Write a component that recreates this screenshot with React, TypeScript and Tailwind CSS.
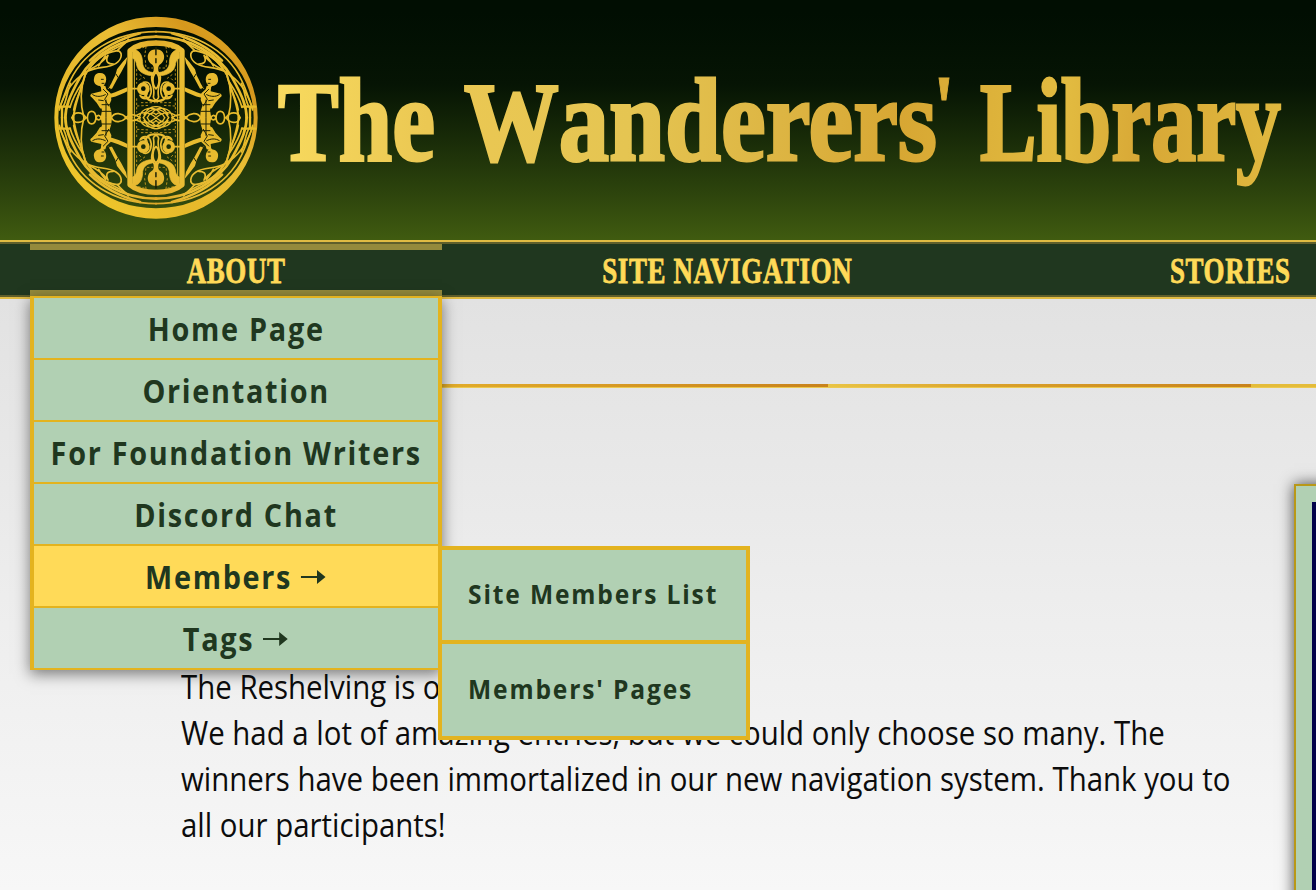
import type { ReactNode } from "react";

function EmblemQuarter() {
  return (
    <g fill="none" stroke="url(#gold)" strokeWidth="5" strokeLinecap="round" strokeLinejoin="round">
      {/* braided rim */}
      <path d="M349 95C222 96 122 158 82 262C70 294 63 310 58 330" strokeWidth="5" />
      <path d="M349 110C246 110 160 164 120 232C88 290 76 320 76 354" strokeWidth="8" />
      <path d="M300 100C236 118 190 142 150 182" strokeWidth="8" />
      <path d="M265 118C252 140 212 146 184 170C160 188 145 206 138 222" />
      <path d="M138 214C128 260 106 296 100 354" strokeWidth="6" />
      <path d="M138 218C98 238 72 284 58 326" />
      <path d="M136 222C120 268 120 310 132 354" />
      <path d="M92 250C80 276 80 306 68 322M128 246C112 270 98 292 90 322M120 274C112 292 104 310 101 330" />
      <path d="M50 320H90M66 320V354" strokeWidth="7" />
      {/* leaf */}
      <path d="M143 214C160 186 190 158 232 152C250 156 246 178 228 190C204 206 172 198 143 214Z" />
      <path d="M150 208C178 196 190 184 204 166C194 188 206 192 220 192M176 198C182 186 188 178 196 168M232 152C246 138 254 128 268 120" />
      {/* figure */}
      <path d="M180 219C202 219 202 244 193 254C190 262 182 264 180 258C164 256 160 244 162 236C164 224 170 219 180 219Z" fill="url(#gold)" stroke="none" />
      <path d="M182 256L196 258L199 268L212 280L214 300L208 314L214 334L216 354H182L186 330L178 312L166 296L152 290L154 281L184 274Z" fill="url(#gold)" stroke="none" />
      <path d="M203 266C212 258 216 244 226 226L231 208L248 186L262 170L258 190L244 216L232 236L216 266Z" fill="url(#gold)" stroke="none" />
      <path d="M192 284C214 284 236 272 262 262V274C240 286 214 296 190 296Z" fill="url(#gold)" stroke="none" />
      <path d="M154 286L172 306L182 322" strokeWidth="6" />
      <path d="M158 284C170 292 184 290 196 284M190 268L204 282L194 298L206 318M186 314H208M198 300V353M184 334H214M176 300L190 302" stroke="#1f2407" strokeWidth="3" />
      <path d="M184 238H190M186 250H192M206 262L208 242M204 262L214 270M228 222L234 232" stroke="#1f2407" strokeWidth="3" />
      {/* framed panel */}
      <path d="M349 129C315 129 286 138 270 152V354" strokeWidth="16" strokeLinecap="butt" />
      <path d="M283 180V354" strokeWidth="3" />
      <path d="M278 148C304 150 308 174 308 192C312 212 328 216 342 218L340 228C314 226 294 216 290 196C288 178 280 178 277 174Z" fill="url(#gold)" strokeWidth="2" />
      <path d="M349 148C318 148 318 182 334 192C344 198 341 208 340 218H349Z" fill="url(#gold)" stroke="none" />
      <path d="M348 142V164M348 176V188" stroke="#1a2006" strokeWidth="4" />
      <path d="M348 218C335 228 337 256 348 266M342 216C324 232 346 258 341 286C338 294 344 298 348 300" />
      <circle cx="310" cy="266" r="13" strokeWidth="12" />
      <path d="M276 266H296M310 247C336 240 336 276 330 288C324 300 306 298 300 286C312 298 322 288 322 276" />
      <path d="M316 286C324 304 338 304 348 302" strokeWidth="7" />
      {/* stipple */}
      <g stroke="#d9a51f" strokeWidth="2.5" strokeDasharray="5 8">
        <path d="M290 208V250M290 296V336M300 224L318 238M304 308H346M318 140L314 170M322 204L338 204M292 318L330 316" />
        <path d="M296 146L312 142M316 182L318 206M298 240L306 232" />
      </g>
      {/* waist chain */}
      <path d="M96 353C102 334 126 334 138 353M142 353C144 328 166 328 168 353M168 353C172 344 178 344 184 353M214 353C224 334 246 340 260 353M256 353C270 342 284 340 300 353" />
      <path d="M298 353C304 322 344 314 362 342M310 353C320 334 336 328 348 328M348 320C328 318 318 334 312 344M322 353C328 338 340 334 348 344M286 348C308 334 324 334 348 353" strokeWidth="4" />
    </g>
  );
}

function Emblem() {
  return (
    <svg viewBox="0 0 720 720" className="h-60 w-60 shrink-0" aria-hidden="true">
      <defs>
        <linearGradient id="gold" gradientUnits="userSpaceOnUse" x1="45" y1="660" x2="650" y2="50">
          <stop offset="0" stopColor="#f4cf2c" />
          <stop offset="0.35" stopColor="#e6b92a" />
          <stop offset="0.6" stopColor="#e9bd34" />
          <stop offset="0.8" stopColor="#d6981d" />
          <stop offset="1" stopColor="#e5b42a" />
        </linearGradient>
      </defs>
      <path
        fill="url(#gold)"
        fillRule="evenodd"
        d="M43 353A305 303 0 1 0 653 353A305 303 0 1 0 43 353ZM55 353A293 272 0 1 1 641 353A293 272 0 1 1 55 353Z"
      />
      <EmblemQuarter />
      <g transform="translate(696 0) scale(-1 1)"><EmblemQuarter /></g>
      <g transform="translate(0 706) scale(1 -1)"><EmblemQuarter /></g>
      <g transform="translate(696 706) scale(-1 -1)"><EmblemQuarter /></g>
    </svg>
  );
}

function Wordmark() {
  return (
    <svg
      viewBox="278 0 1036 240"
      className="-ml-0.5 h-60 w-[1036px] shrink-0 font-['Liberation_Serif',serif] font-bold"
      role="img"
      aria-label="The Wanderers' Library"
    >
      <defs>
        <linearGradient id="title" gradientUnits="userSpaceOnUse" x1="278" y1="90" x2="1282" y2="170">
          <stop offset="0" stopColor="#f8da5e" />
          <stop offset="0.15" stopColor="#ebc853" />
          <stop offset="0.35" stopColor="#e5c552" />
          <stop offset="0.5" stopColor="#ddb543" />
          <stop offset="0.62" stopColor="#d7a733" />
          <stop offset="0.78" stopColor="#e2bb40" />
          <stop offset="0.86" stopColor="#d8a836" />
          <stop offset="1" stopColor="#e0b93f" />
        </linearGradient>
      </defs>
      <g fill="url(#title)" stroke="url(#title)" strokeWidth="3" fontSize="119">
        <text x="278" y="160" textLength="157" lengthAdjust="spacingAndGlyphs"><tspan fontSize="112">T</tspan>he</text>
        <text x="464" y="160" textLength="473" lengthAdjust="spacingAndGlyphs"><tspan fontSize="112">W</tspan>anderers</text>
        <text x="933" y="139" fontSize="94" strokeWidth="1" textLength="22" lengthAdjust="spacingAndGlyphs">'</text>
        <text x="980" y="160" textLength="301" lengthAdjust="spacingAndGlyphs"><tspan fontSize="112">L</tspan>ibrary</text>
      </g>
    </svg>
  );
}

function NavItem({ width, active, children }: { width: string; active?: boolean; children: ReactNode }) {
  return (
    <li className={`${width} flex h-[52px] shrink-0 items-center justify-center border-y-[6px] ${active ? "border-[#948a3c]" : "border-transparent"}`}>
      <span className="scale-x-[0.77] pt-0.5 pl-px font-['Liberation_Serif',serif] text-[35px] leading-none font-bold tracking-[0.8px] whitespace-nowrap text-[#ffda58] [-webkit-text-stroke:0.8px_#ffda58]">
        {children}
      </span>
    </li>
  );
}

function Arrow() {
  return (
    <svg viewBox="0 0 28 16" className="ml-2.5 h-4 w-7" fill="currentColor" role="img" aria-label="→">
      <path d="M0 7H18V1L27.5 8L18 15V9H0Z" />
    </svg>
  );
}

const menu = [
  { label: "Home Page" },
  { label: "Orientation" },
  { label: "For Foundation Writers" },
  { label: "Discord Chat" },
  { label: "Members", sub: true, active: true },
  { label: "Tags", sub: true },
];

function AboutMenu() {
  return (
    <div className="absolute top-[296px] left-[30px] z-10 w-[412px] border-x-4 border-t-2 border-[#e3b31f] text-[#20371f] shadow-[0_4px_14px_rgba(0,0,0,0.5)]">
      <ul>
        {menu.map((m) => (
          <li
            key={m.label}
            className={`flex h-[62px] items-center justify-center border-b-2 border-[#e3b31f] pt-px ${m.active ? "bg-[#ffda58]" : "bg-[#b1d0b3]"}`}
          >
            <span className="flex scale-x-90 items-center text-[32px] leading-none font-bold tracking-[1.9px] whitespace-nowrap">
              {m.label}
              {m.sub && <Arrow />}
            </span>
          </li>
        ))}
      </ul>
      <ul className="absolute top-[248px] left-[404px] w-[312px] border-4 border-[#e3b31f] bg-[#b1d0b3] text-[27px] font-bold">
        <li className="flex h-[94px] items-center border-b-4 border-[#e3b31f] pb-0.5 pl-[26px]">
          <span className="origin-left scale-x-[0.91] tracking-[2.05px] whitespace-nowrap">Site Members List</span>
        </li>
        <li className="flex h-[92px] items-center pb-0.5 pl-[26px]">
          <span className="origin-left scale-x-[0.91] tracking-[2.05px] whitespace-nowrap">Members' Pages</span>
        </li>
      </ul>
    </div>
  );
}

export default function App() {
  return (
    <div className="relative flex h-[890px] w-[1316px] flex-col overflow-hidden bg-[#f6f6f6] font-['Open_Sans',sans-serif]">
      <header className="flex h-60 shrink-0 bg-linear-to-b from-[#010e02] from-5% via-[#061404] via-35% to-[#405b10] pl-10">
        <Emblem />
        <Wordmark />
      </header>
      <nav className="h-[59px] shrink-0 border-t-2 border-b-2 border-t-[#e0bb43] border-b-[#e0bb43] bg-[#20371f]">
        <ul className="flex h-full border-y-2 border-[#5f5f2b] pl-[30px]">
          <NavItem width="w-[412px]" active>ABOUT</NavItem>
          <NavItem width="w-[570px]">SITE NAVIGATION</NavItem>
          <NavItem width="w-[436px]">STORIES</NavItem>
        </ul>
      </nav>
      <AboutMenu />
      <main className="flex grow bg-linear-to-b from-[#e2e2e2] via-[#ededed] via-50% to-[#f7f7f7]">
        <div className="flex w-[1294px] shrink-0 flex-col pt-[85px]">
          <div className="-mr-[22px] ml-[181px] flex h-1 shrink-0 border-b border-[#ecc94f]">
            <div className="w-[226px] shrink-0" />
            <div className="w-[421px] shrink-0 bg-linear-to-r from-[#e4b02c] to-[#c8821c]" />
            <div className="w-[423px] shrink-0 bg-linear-to-r from-[#e9c445] via-[#d9a02a] via-40% to-[#c8821c]" />
            <div className="grow bg-[#e4bc3a]" />
          </div>
          <p className="mt-[276px] ml-[181px] origin-left scale-x-[0.919] text-[32px] leading-[46px] whitespace-nowrap text-[#0c0c0c]">
            The Reshelving is over!
            <br />
            We had a lot of amazing entries, but we could only choose so many. The
            <br />
            winners have been immortalized in our new navigation system. Thank you to
            <br />
            all our participants!
          </p>
        </div>
        <aside className="mt-[185px] -mb-4 w-60 shrink-0 border-2 border-[#b99818] bg-[#b1d0b3] pt-4 pl-4 shadow-[0_0_14px_rgba(0,0,0,0.7)]">
          <div className="h-full bg-[#02024a]" />
        </aside>
      </main>
    </div>
  );
}
